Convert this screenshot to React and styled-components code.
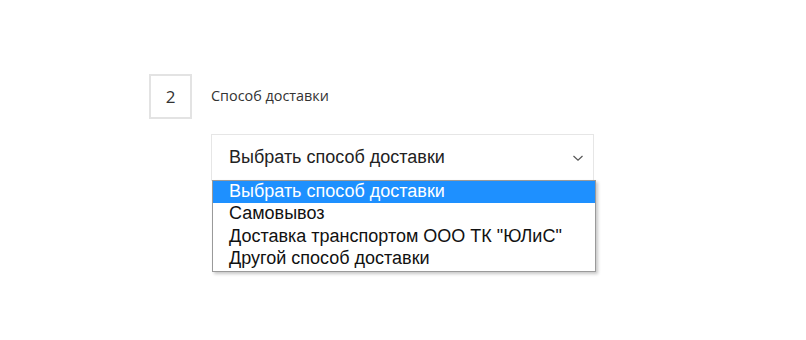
import React, { useState } from "react"
import styled, { createGlobalStyle } from "styled-components"

const Global = createGlobalStyle`
  html, body {
    margin: 0;
    padding: 0;
    background: #ffffff;
  }
  body {
    font-family: "Open Sans", "Noto Sans", sans-serif;
    color: #333;
  }
`

const Page = styled.div`
  width: 806px;
  height: 340px;
  padding: 74px 0 0 149px;
  box-sizing: border-box;
`

const Step = styled.div`
  display: grid;
  grid-template-columns: 43px 383px;
  column-gap: 19px;
  row-gap: 15px;
  align-items: center;
`

const StepNumber = styled.div`
  width: 43px;
  height: 45px;
  box-sizing: border-box;
  border: 2px solid #e3e3e3;
  display: flex;
  align-items: center;
  justify-content: center;
  font-size: 17px;
  color: #333;
`

const Label = styled.div`
  font-size: 14.4px;
  color: #333;
  padding-bottom: 2px;
`

const SelectWrap = styled.div`
  grid-column: 2;
  position: relative;
`

const SelectBox = styled.div`
  height: 47px;
  box-sizing: border-box;
  border: 1px solid #e6e6e6;
  display: flex;
  align-items: center;
  justify-content: space-between;
  padding: 0 9px 0 17px;
  font-family: "Liberation Sans", Arial, sans-serif;
  font-size: 18px;
  color: #222;
`

const Chevron = styled.svg`
  width: 12px;
  height: 8px;
`

const Menu = styled.ul`
  position: absolute;
  left: 1px;
  top: 46px;
  width: 384px;
  margin: 0;
  padding: 0;
  list-style: none;
  box-sizing: border-box;
  border: 1px solid #9a9a9a;
  background: #fff;
  box-shadow: 2px 2px 3px rgba(0, 0, 0, 0.22);
  font-family: "Liberation Sans", Arial, sans-serif;
  font-size: 18px;
`

const Option = styled.li`
  height: 22.4px;
  line-height: 21.5px;
  padding-left: 16px;
  color: ${p => (p.$active ? "#fff" : "#111")};
  background: ${p => (p.$active ? "#1e90ff" : "transparent")};
  white-space: nowrap;
`

const options = [
  "Выбрать способ доставки",
  "Самовывоз",
  "Доставка транспортом ООО ТК \"ЮЛиС\"",
  "Другой способ доставки",
]

export default function App() {
  const [active] = useState(0)

  return (
    <>
      <Global />
      <Page>
        <Step>
          <StepNumber>2</StepNumber>
          <Label>Способ доставки</Label>
          <SelectWrap>
            <SelectBox>
              <span>Выбрать способ доставки</span>
              <Chevron viewBox="0 0 12 8">
                <path d="M1.5 2 L6 6.2 L10.5 2" fill="none" stroke="#555" strokeWidth="1.2" />
              </Chevron>
            </SelectBox>
            <Menu>
              {options.map((o, i) => (
                <Option key={o} $active={i === active}>{o}</Option>
              ))}
            </Menu>
          </SelectWrap>
        </Step>
      </Page>
    </>
  )
}
